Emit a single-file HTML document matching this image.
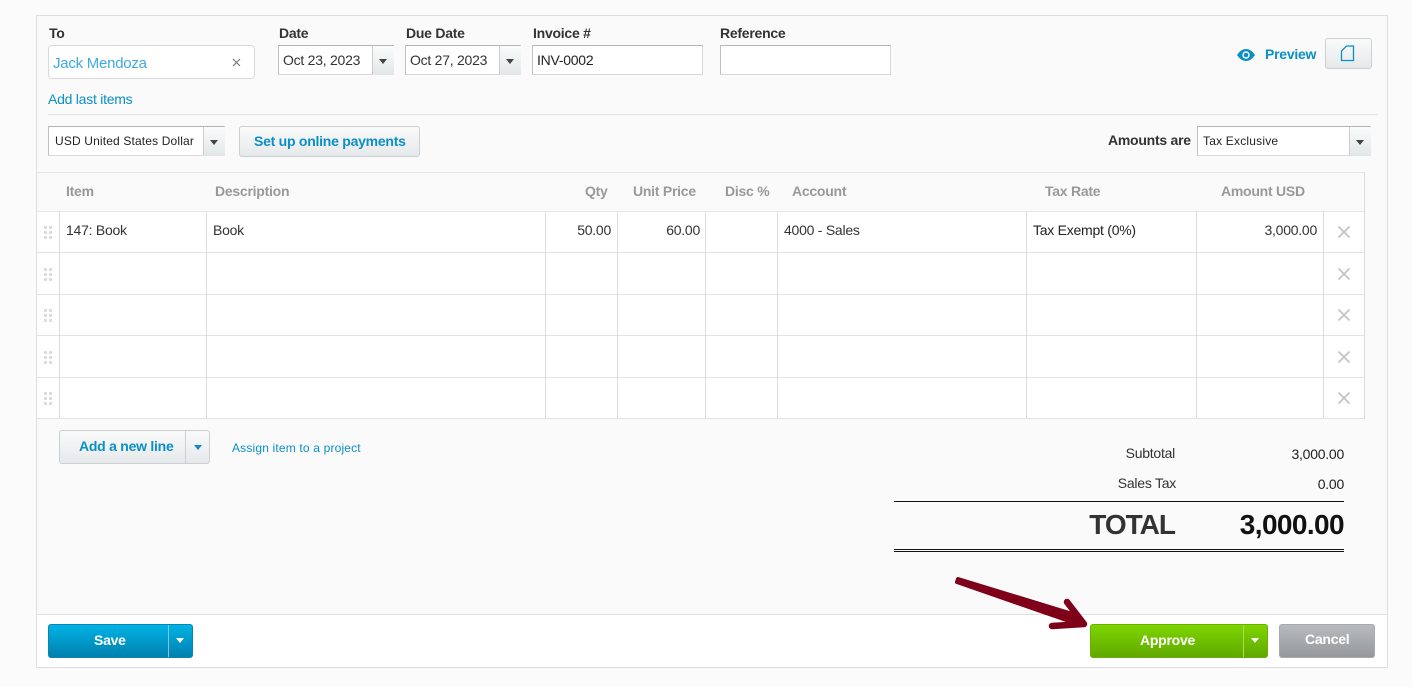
<!DOCTYPE html>
<html><head><meta charset="utf-8">
<style>
html,body{margin:0;padding:0;width:1412px;height:687px;overflow:hidden;background:#fbfbfb;font-family:"Liberation Sans",sans-serif;font-size:14px;color:#333;letter-spacing:-.25px}
.a{position:absolute;white-space:nowrap;line-height:16px}
.box{position:absolute;box-sizing:border-box}
.l{position:absolute;font-weight:bold;color:#333;line-height:16px;white-space:nowrap;font-size:14px}
.inp{position:absolute;box-sizing:border-box;background:#fff;border:1px solid #d9d9d9;border-top-color:#b5b5b5;border-left-color:#c0c0c0}
.dd{position:absolute;box-sizing:border-box;background:linear-gradient(#fafbfb,#e4e7e9);border-left:1px solid #ccc;border-bottom:1px solid #e4e4e4}
.tri{position:absolute;width:0;height:0;border-left:4px solid transparent;border-right:4px solid transparent;border-top:5px solid #444}
.btn{position:absolute;box-sizing:border-box;border:1px solid #ccd0d3;border-radius:3px;background:linear-gradient(#f9fafa,#e6e9eb)}
.hl{position:absolute;background:#e3e3e3;height:1px}
.vl{position:absolute;background:#dcdcdc;width:1px}
.h{position:absolute;font-weight:bold;color:#999;line-height:16px;white-space:nowrap}
.blue{color:#0b8fc4}
</style></head><body>
<div class="box" style="left:36px;top:15px;width:1352px;height:653px;background:#fafafa;border:1px solid #dedede"></div>

<div class="l" style="left:49px;top:25px">To</div>
<div class="l" style="left:279px;top:25px">Date</div>
<div class="l" style="left:406px;top:25px">Due Date</div>
<div class="l" style="left:533px;top:25px">Invoice #</div>
<div class="l" style="left:720px;top:25px">Reference</div>

<div class="box" style="left:48px;top:45px;width:207px;height:34px;background:#fff;border:1px solid #d8dadc;border-radius:4px"></div>
<div class="a" style="left:53px;top:56px;font-size:15px;color:#3fa9e0">Jack Mendoza</div>
<svg class="box" style="left:232px;top:58px" width="9" height="9"><path d="M1 1L8 8M8 1L1 8" stroke="#777" stroke-width="1.2"/></svg>

<div class="inp" style="left:278px;top:45px;width:116px;height:30px"></div>
<div class="a" style="left:283px;top:52px;color:#333">Oct 23, 2023</div>
<div class="dd" style="left:372px;top:46px;width:22px;height:29px"><div class="tri" style="left:6px;top:13px"></div></div>

<div class="inp" style="left:405px;top:45px;width:116px;height:30px"></div>
<div class="a" style="left:410px;top:52px;color:#333">Oct 27, 2023</div>
<div class="dd" style="left:499px;top:46px;width:22px;height:29px"><div class="tri" style="left:6px;top:13px"></div></div>

<div class="inp" style="left:532px;top:45px;width:171px;height:30px"></div>
<div class="a" style="left:537px;top:52px;color:#222">INV-0002</div>
<div class="inp" style="left:720px;top:45px;width:171px;height:30px"></div>

<svg class="box" style="left:1237px;top:48px" width="18" height="14" viewBox="0 0 18 14"><path d="M0 7C3 2.500 6 1 9 1s6 1.500 9 6c-3 4.500-6 6-9 6S3 11.500 0 7z" fill="#0b8fc4"/><circle cx="9" cy="7" r="3.700" fill="#fff"/><circle cx="9" cy="7" r="2.300" fill="#0b8fc4"/></svg>
<div class="a blue" style="left:1265px;top:46px;font-weight:bold">Preview</div>
<div class="btn" style="left:1325px;top:38px;width:47px;height:31px"></div>
<svg class="box" style="left:1340px;top:45px" width="15" height="17" viewBox="0 0 15 17"><path d="M1.500 15.500V6L6.500 1H13.500V15.500Z" fill="none" stroke="#0b8fc4" stroke-width="1.300"/></svg>

<div class="a blue" style="left:48px;top:91px">Add last items</div>
<div class="hl" style="left:48px;top:114px;width:1330px"></div>

<div class="inp" style="left:48px;top:126px;width:177px;height:30px"></div>
<div class="a" style="left:55px;top:133px;font-size:12px;color:#222;letter-spacing:.15px">USD United States Dollar</div>
<div class="dd" style="left:203px;top:127px;width:22px;height:29px"><div class="tri" style="left:6px;top:13px"></div></div>
<div class="btn" style="left:239px;top:126px;width:181px;height:31px"></div>
<div class="a blue" style="left:254px;top:133px;font-weight:bold">Set up online payments</div>

<div class="l" style="left:1108px;top:132px">Amounts are</div>
<div class="inp" style="left:1197px;top:126px;width:174px;height:30px"></div>
<div class="a" style="left:1203px;top:133px;font-size:12px;color:#222;letter-spacing:.2px">Tax Exclusive</div>
<div class="dd" style="left:1349px;top:127px;width:22px;height:29px"><div class="tri" style="left:6px;top:13px"></div></div>

<!-- table -->
<div class="box" style="left:37px;top:172px;width:1328px;height:247px;background:#fff"></div>
<div class="box" style="left:37px;top:172px;width:1328px;height:40px;background:#fafafa;border-top:1px solid #e6e6e6;border-bottom:1px solid #e6e6e6"></div>
<div class="hl" style="left:37px;top:252px;width:1328px"></div>
<div class="hl" style="left:37px;top:294px;width:1328px"></div>
<div class="hl" style="left:37px;top:335px;width:1328px"></div>
<div class="hl" style="left:37px;top:377px;width:1328px"></div>
<div class="hl" style="left:37px;top:418px;width:1328px"></div>
<div class="vl" style="left:59px;top:212px;height:206px"></div>
<div class="vl" style="left:206px;top:212px;height:206px"></div>
<div class="vl" style="left:545px;top:212px;height:206px"></div>
<div class="vl" style="left:617px;top:212px;height:206px"></div>
<div class="vl" style="left:705px;top:212px;height:206px"></div>
<div class="vl" style="left:777px;top:212px;height:206px"></div>
<div class="vl" style="left:1026px;top:212px;height:206px"></div>
<div class="vl" style="left:1196px;top:212px;height:206px"></div>
<div class="vl" style="left:1323px;top:212px;height:206px"></div>
<div class="vl" style="left:1364px;top:172px;height:247px"></div>

<div class="h" style="left:66px;top:183px">Item</div>
<div class="h" style="left:215px;top:183px">Description</div>
<div class="h" style="left:585px;top:183px">Qty</div>
<div class="h" style="left:633px;top:183px">Unit Price</div>
<div class="h" style="left:725px;top:183px">Disc %</div>
<div class="h" style="left:792px;top:183px">Account</div>
<div class="h" style="left:1045px;top:183px">Tax Rate</div>
<div class="h" style="left:1221px;top:183px">Amount USD</div>

<div class="a" style="left:66px;top:222px">147: Book</div>
<div class="a" style="left:213px;top:222px">Book</div>
<div class="a" style="right:801px;top:222px">50.00</div>
<div class="a" style="right:712px;top:222px">60.00</div>
<div class="a" style="left:784px;top:222px">4000 - Sales</div>
<div class="a" style="left:1033px;top:222px;color:#222">Tax Exempt (0%)</div>
<div class="a" style="right:95px;top:222px">3,000.00</div>

<svg class="box" style="left:43px;top:226px" width="9" height="180" fill="#dcdcdc">
<g><rect x="1" y="0" width="3" height="3"/><rect x="6" y="0" width="3" height="3"/><rect x="1" y="5" width="3" height="3"/><rect x="6" y="5" width="3" height="3"/><rect x="1" y="10" width="3" height="3"/><rect x="6" y="10" width="3" height="3"/></g>
<g transform="translate(0,42)"><rect x="1" y="0" width="3" height="3"/><rect x="6" y="0" width="3" height="3"/><rect x="1" y="5" width="3" height="3"/><rect x="6" y="5" width="3" height="3"/><rect x="1" y="10" width="3" height="3"/><rect x="6" y="10" width="3" height="3"/></g>
<g transform="translate(0,83)"><rect x="1" y="0" width="3" height="3"/><rect x="6" y="0" width="3" height="3"/><rect x="1" y="5" width="3" height="3"/><rect x="6" y="5" width="3" height="3"/><rect x="1" y="10" width="3" height="3"/><rect x="6" y="10" width="3" height="3"/></g>
<g transform="translate(0,125)"><rect x="1" y="0" width="3" height="3"/><rect x="6" y="0" width="3" height="3"/><rect x="1" y="5" width="3" height="3"/><rect x="6" y="5" width="3" height="3"/><rect x="1" y="10" width="3" height="3"/><rect x="6" y="10" width="3" height="3"/></g>
<g transform="translate(0,166)"><rect x="1" y="0" width="3" height="3"/><rect x="6" y="0" width="3" height="3"/><rect x="1" y="5" width="3" height="3"/><rect x="6" y="5" width="3" height="3"/><rect x="1" y="10" width="3" height="3"/><rect x="6" y="10" width="3" height="3"/></g>
</svg>

<svg class="box" style="left:1337px;top:225px" width="14" height="180" fill="none" stroke="#c4c4c4" stroke-width="1.800">
<path d="M1.500 1.500L12.500 12.500M12.500 1.500L1.500 12.500"/>
<path d="M1.500 43.500L12.500 54.500M12.500 43.500L1.500 54.500"/>
<path d="M1.500 84.500L12.500 95.500M12.500 84.500L1.500 95.500"/>
<path d="M1.500 126.500L12.500 137.500M12.500 126.500L1.500 137.500"/>
<path d="M1.500 167.500L12.500 178.500M12.500 167.500L1.500 178.500"/>
</svg>

<!-- add line -->
<div class="btn" style="left:59px;top:430px;width:151px;height:34px"></div>
<div class="vl" style="left:185px;top:431px;height:32px;background:#ccd0d3"></div>
<div class="a blue" style="left:79px;top:438px;font-weight:bold">Add a new line</div>
<div class="tri" style="left:194px;top:445px;border-top-color:#0b8fc4"></div>
<div class="a blue" style="left:232px;top:440px;font-size:12px;letter-spacing:.17px">Assign item to a project</div>

<!-- totals -->
<div class="a" style="right:237px;top:445px">Subtotal</div>
<div class="a" style="right:68px;top:446px;color:#222">3,000.00</div>
<div class="a" style="right:236px;top:475px">Sales Tax</div>
<div class="a" style="right:68px;top:476px;color:#222">0.00</div>
<div class="box" style="left:894px;top:501px;width:450px;height:1px;background:#111"></div>
<div class="a" style="right:237px;top:509px;font-size:28px;line-height:32px;font-weight:bold;color:#333;letter-spacing:-1px">TOTAL</div>
<div class="a" style="right:68px;top:509px;font-size:28px;line-height:32px;font-weight:bold;color:#111;letter-spacing:-.6px">3,000.00</div>
<div class="box" style="left:894px;top:549px;width:450px;height:3px;border-top:1px solid #111;border-bottom:1px solid #111"></div>

<!-- footer -->
<div class="box" style="left:37px;top:614px;width:1350px;height:53px;background:#fff;border-top:1px solid #e0e0e0"></div>
<div class="box" style="left:48px;top:624px;width:145px;height:34px;border-radius:3px;background:linear-gradient(#00b3e6,#0080ae);border:1px solid #0a85b3"></div>
<div class="box" style="left:168px;top:625px;width:1px;height:32px;background:#7cc6e0"></div>
<div class="a" style="left:94px;top:632px;font-weight:bold;color:#fff">Save</div>
<div class="tri" style="left:176px;top:638px;border-top-color:#fff"></div>

<div class="box" style="left:1090px;top:624px;width:178px;height:34px;border-radius:3px;background:linear-gradient(#7ed600,#60a800);border:1px solid #6cb000"></div>
<div class="box" style="left:1243px;top:625px;width:1px;height:32px;background:#a8dc60"></div>
<div class="a" style="left:1140px;top:632px;font-weight:bold;color:#fff">Approve</div>
<div class="tri" style="left:1251px;top:638px;border-top-color:#fff"></div>

<div class="box" style="left:1279px;top:624px;width:96px;height:34px;border-radius:3px;background:linear-gradient(#b8bbbe,#96999c);border:1px solid #a8abae"></div>
<div class="a" style="left:1305px;top:631px;font-weight:bold;color:#fff">Cancel</div>

<!-- arrow -->
<svg class="box" style="left:950px;top:570px" width="145" height="65" viewBox="0 0 145 65" fill="#7f0019" stroke="#7f0019" stroke-linecap="round" stroke-linejoin="round">
<path d="M8 9L7 12L125 53L129 46Z" stroke-width="4"/>
<path d="M117 32L134 54L102 56" fill="none" stroke-width="6.500"/>
<path d="M122 44L134 54L114 55Z" stroke-width="2"/>
</svg>
</body></html>
